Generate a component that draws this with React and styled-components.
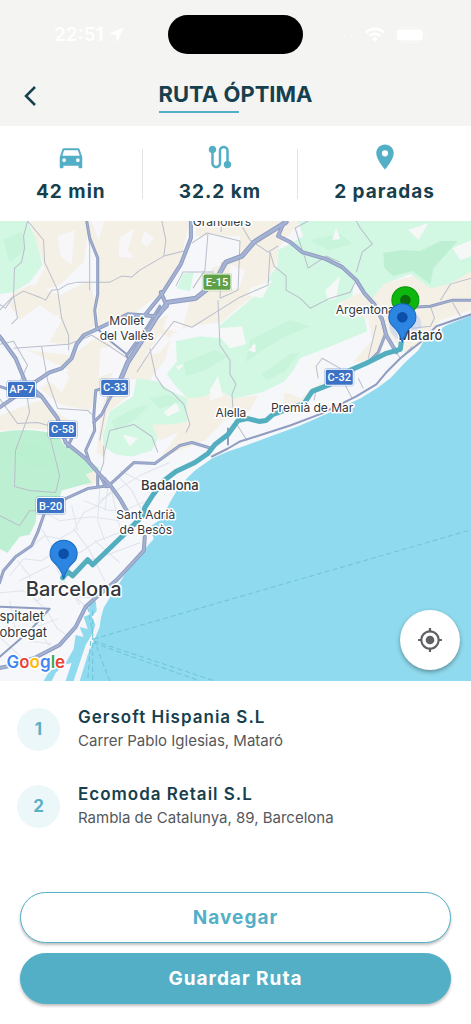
import React from 'react'
import styled, { createGlobalStyle } from 'styled-components'
import { MdDirectionsCar, MdRoute, MdLocationOn, MdMyLocation } from 'react-icons/md'

const GlobalStyle = createGlobalStyle`
  * {
    box-sizing: border-box;
  }
  body {
    margin: 0;
    background: #ffffff;
    font-family: Inter, 'Liberation Sans', sans-serif;
    color: #173f4e;
  }
  button {
    font-family: inherit;
    cursor: pointer;
  }
`

const Page = styled.div`
  display: flex;
  flex-direction: column;
  min-height: 100vh;
`

const Header = styled.header`
  background: #f4f4f2;
  padding: 15px 0 9px;
`

const StatusBar = styled.div`
  display: grid;
  grid-template-columns: 1fr auto 1fr;
  align-items: center;
  color: #ffffff;
`

const Island = styled.div`
  width: 135px;
  height: 39px;
  border-radius: 20px;
  background: #000000;
`

const StatusSide = styled.div`
  display: flex;
  align-items: center;
  gap: ${({ $gap }) => $gap};
  padding: ${({ $padding }) => $padding};
  justify-content: ${({ $end }) => ($end ? 'flex-end' : 'flex-start')};
  font-size: 19px;
  font-weight: 600;
`

const TitleBar = styled.div`
  display: grid;
  grid-template-columns: 60px 1fr 60px;
  align-items: center;
  margin-top: 21px;
`

const BackButton = styled.button`
  display: flex;
  width: 60px;
  height: 42px;
  padding: 0;
  align-items: center;
  justify-content: center;
  border: 0;
  background: transparent;
  color: #173f4e;
`

const Title = styled.h1`
  justify-self: center;
  margin: 0;
  font-size: 22px;
  font-weight: 700;
  line-height: 30px;
  &::after {
    content: '';
    display: block;
    width: 80px;
    height: 2px;
    margin-top: 2px;
    background: #53afc6;
  }
`

const Stats = styled.section`
  display: flex;
  justify-content: space-evenly;
  align-items: center;
  height: 95px;
`

const Stat = styled.div`
  display: flex;
  flex-direction: column;
  align-items: center;
  gap: 8px;
  padding-bottom: 2px;
  font-size: 19px;
  font-weight: 700;
  line-height: 24px;
  letter-spacing: 1px;
  svg {
    color: #53afc6;
  }
`

const Divider = styled.div`
  width: 1px;
  height: 50px;
  background: #e2e4e6;
`

const MapArea = styled.section`
  position: relative;
  flex: 1;
  min-height: 320px;
  overflow: hidden;
  background: #8fdaee;
`

const MapCanvas = styled.svg`
  position: absolute;
  inset: 0;
  width: 100%;
  height: 100%;
`

const Label = styled.text`
  font-family: ${({ $font }) => $font || "Inter, 'Liberation Sans', sans-serif"};
  font-size: ${({ $size }) => $size || 12}px;
  font-weight: ${({ $weight }) => $weight || 400};
  fill: ${({ $fill }) => $fill || '#33373c'};
  text-anchor: ${({ $anchor }) => $anchor || 'middle'};
  stroke: ${({ $plain }) => ($plain ? 'none' : '#ffffff')};
  stroke-width: 3px;
  stroke-linejoin: round;
  paint-order: stroke;
`

const LocateButton = styled.button`
  position: absolute;
  right: 11px;
  bottom: 11px;
  display: flex;
  width: 60px;
  height: 60px;
  align-items: center;
  justify-content: center;
  border: 0;
  border-radius: 50%;
  background: #ffffff;
  color: #5f6063;
  box-shadow: 0 2px 4px rgba(0, 0, 0, 0.35);
`

const StopList = styled.ol`
  display: flex;
  flex-direction: column;
  gap: 31px;
  margin: 0;
  padding: 25px 17px 63px;
  list-style: none;
`

const Stop = styled.li`
  display: flex;
  align-items: center;
  gap: 18px;
`

const StopNumber = styled.span`
  display: flex;
  width: 43px;
  height: 43px;
  flex-shrink: 0;
  align-items: center;
  justify-content: center;
  border-radius: 50%;
  background: #ecf7fa;
  color: #5cb0c4;
  font-size: 17px;
  font-weight: 700;
`

const StopName = styled.div`
  font-size: 17px;
  font-weight: 600;
  line-height: 23px;
  letter-spacing: 1px;
`

const StopAddress = styled.div`
  color: #55585c;
  font-size: 15px;
  line-height: 23px;
`

const Actions = styled.div`
  display: flex;
  flex-direction: column;
  gap: 10px;
  padding: 0 20px 20px;
`

const ActionButton = styled.button`
  height: 51px;
  border: 1px solid #53afc6;
  border-radius: 26px;
  background: ${({ $primary }) => ($primary ? '#53afc6' : '#ffffff')};
  color: ${({ $primary }) => ($primary ? '#ffffff' : '#53afc6')};
  font-size: 19px;
  font-weight: 700;
  letter-spacing: 1px;
  box-shadow: 0 2px 3px rgba(0, 0, 0, 0.25);
`

const beige = [
  'M30 221H190L180 262L165 290L128 318L98 328V258L88 232L84 262L60 285L44 290L32 292L45 268Z',
  'M14 292L32 284L60 295L90 280L95 300V325L72 345L50 342L62 320L40 305L20 320L8 302Z',
  'M100 240L135 224L160 235L168 260L150 292L122 318L100 320Z',
  'M196 221H300L278 249L276 266L256 294L232 312L222 322L190 326L172 334L165 360L150 380L120 378L150 325L205 292L212 268L240 258V236H196Z',
  'M28 350L72 355L100 335L120 350L112 375L98 392L90 410L60 404L40 388L70 370Z',
  'M148 400L185 395L195 425L160 440L150 425Z',
  'M104 400L112 392L128 396L108 412L102 440L108 460L130 470L112 462L97 452L100 425Z',
  'M375 285L440 270L471 262V310L440 320L420 345L405 352L388 335L378 355L362 362L352 362L372 340L368 318L345 314L340 302Z',
  'M185 395L215 388L232 398L258 395L250 410L225 420L205 440L175 452L160 458L180 430L190 410Z',
  'M285 390L300 398L312 388L325 380L305 400L280 414Z',
  'M0 415L40 400L70 420L65 430L30 428L0 430Z',
  'M58 446L90 460L104 478L88 486L78 472L68 465Z',
]

const pale = [
  'M120 238L135 228L128 250L134 258L119 257Z',
  'M58 236L75 230L72 265L61 256Z',
  'M92 221L104 221L99 241Z',
  'M145 231L154 238L147 247L141 242Z',
  'M174 302L190 302L181 333L163 328Z',
  'M101 348L126 343L137 353L120 370L99 377Z',
  'M42 315L60 315L49 337Z',
  'M61 365L70 377L62 392L48 379Z',
  'M208 234L225 236L228 262L208 266Z',
  'M230 264L245 270L240 286L229 291Z',
  'M172 338L160 352L145 356L160 334Z',
]

const green = [
  'M0 221H28L36 238L43 265L30 282L14 292L0 294Z',
  'M298 221H471V271L448 284L430 288L410 274L383 284L372 298L354 281L352 296L337 304L343 316L364 317L367 331L333 345L300 358L292 372L283 382L262 392L234 398L217 389L205 396L188 398L176 386L167 374L177 361L176 341L200 336L222 338L220 325L233 314L258 293L277 266L278 250L290 244L303 236Z',
  'M137 378L157 381L170 390L187 398V421L172 424L152 424L158 438L152 450L132 456L116 454L104 446L103 436L110 411L133 396Z',
  'M177 288L183 274L194 272L190 291Z',
]

const shaded = [
  'M250 340L290 320L310 326L285 336L262 350L246 362Z',
  'M184 362L215 350L228 356L205 370L186 376Z',
  'M262 374L290 354L300 352L284 372L266 380Z',
  'M112 420L134 408L150 404L136 418L116 430Z',
  'M150 398L170 394L180 402L160 408Z',
  'M310 240L340 234L352 244L328 250Z',
  'M4 240L22 232L26 250L10 262Z',
  'M12 446L44 442L56 462L30 470Z',
]

const deepGreen = [
  'M0 432Q28 426 58 434L64 444L84 456L100 468L86 474L92 482L62 490L60 497L38 500L36 522L30 534L20 536L8 552L0 548Z',
  'M383 253L402 250L420 251L440 241H457L444 256L433 268L430 284L412 271L393 276L384 268Z',
]

const clearings = [
  'M408 230L428 223L418 240Z',
  'M250 288L272 280L262 298L248 295Z',
  'M220 328L242 326L246 344L230 348L221 338Z',
  'M248 350L256 344L254 352Z',
  'M325 290L340 276L336 298L328 300Z',
  'M336 228L340 239L332 240Z',
  'M123 434L138 438L130 446Z',
  'M304 366L320 350L330 362L325 376L312 374Z',
  'M210 390L218 376L223 396L210 400Z',
  'M250 350L254 342L256 352Z',
  'M164 412L176 402L180 410L168 416Z',
  'M283 382L294 380L292 394L284 392Z',
  'M452 248L471 240V256L460 260Z',
  'M176 366L184 364L179 370Z',
]

const streets = [
  'M28 221L24 236L25 248L22 262L15 268L14 296L6 308L0 304',
  'M28 221L44 240L45 262L58 290L62 318L69 335V350',
  'M87 225L90 245V290',
  'M0 310L12 298L24 291L40 297L46 300L52 290L60 289L68 284L78 282H110L122 276L132 277L140 270L164 256L184 251',
  'M164 256L166 240L162 221',
  'M192 243L207 233L240 241',
  'M208 234L205 270L193 288',
  'M14 296L18 318L12 324',
  'M0 344L14 341L28 365L20 382',
  'M14 348L69 344L92 335L110 346L128 358',
  'M42 346L48 380L58 408L88 410L92 414',
  'M137 372L150 352L174 321L192 327L216 312L240 297L268 285L270 252',
  'M218 300L220 345L230 360L230 374L236 384L232 394L233 408',
  'M176 286L183 272L214 272M222 221L221 232M222 262L220 298M240 241L238 290L220 298',
  'M240 223L250 240L268 252L278 246M270 252L274 266L286 276L286 290L300 298L310 308L330 298L350 292L356 280',
  'M356 272L362 252L372 244L360 228L356 221M303 252L308 268L326 256L340 262',
  'M302 250L295 228L308 221',
  'M150 348L156 376L164 388L172 392L184 404L190 424L186 432',
  'M104 455L110 430L134 424L152 436L158 452',
  'M104 445L104 462L100 473M110 385L100 440',
  'M0 398L18 423L38 422L60 428M26 386L30 412L16 450L15 486L30 490L56 492L60 475L50 435',
  'M0 515L20 525L30 510L45 510',
  'M376 325L368 358M430 306L434 318L430 326L412 328L408 310',
  'M318 378L316 366L322 358L340 368L334 376M316 388L314 400',
  'M345 385L352 398M235 421L247 440M358 378L363 388',
  'M452 302L460 316M440 300L450 284L471 278M396 352L400 358L412 346',
]

const cityStreets = [
  'M30 548L45 535L60 538L74 530L84 512L98 505L112 490',
  'M10 575L24 558L42 560L60 548L80 552L98 540L125 530',
  'M0 592L24 590L38 600L52 588L74 596L95 597',
  'M18 560L30 575L34 598L46 608L58 628L70 636',
  'M42 528L52 545L58 570L70 588L80 604',
  'M74 528L90 550L105 580M95 540L120 562M60 580L92 612',
  'M84 500L110 510L128 508L148 500M100 488L98 520L105 540',
  'M112 490L118 520L125 540M120 470L150 485L168 485',
  'M100 500L140 475L170 462M118 475L132 490L142 510',
  'M0 620L20 612L40 625L58 618M10 600L16 628L30 640L52 643',
  'M88 560L105 555L140 542M20 580L50 565M72 505L78 530',
  'M45 512L60 520L92 516L120 520M108 488L105 510',
  'M0 636L15 650L25 660M38 628L50 645',
]

const highways = [
  ['M87 221L90 238L98 258V294L95 310L97 328', 3],
  ['M191 221V238L181 264L162 294L145 315', 4],
  ['M286 222L254 242L242 256L226 262L218 276L206 290L196 298L168 302L156 318L145 336L128 362L118 386', 5],
  ['M161 292L167 306L157 316L128 314L97 329L84 335L77 344L72 358L62 368L50 372L35 382L22 392L0 407', 4],
  ['M97 328L112 342L127 354L129 362', 2],
  ['M0 336L16 358L26 382L42 396L58 418L66 442L86 458L100 474L110 484L120 498L128 512', 4],
  ['M0 386L18 392L40 396', 3],
  ['M127 355L148 326L160 306', 3],
  ['M118 384L96 390L94 416L95 430L86 450L90 462L100 474L106 486', 3],
  ['M118 384L108 402L102 414L94 422', 3],
  ['M108 486L134 462L155 463L180 445L192 442L212 448', 3],
  ['M110 485L88 488L66 498L45 512L38 532L32 545L16 556L4 570L0 582', 3],
  ['M98 474V486M105 478L108 486M72 438L68 446', 3],
  ['M145 536L144 550L132 563L116 580L96 597L86 606L76 626L60 644L35 657L10 665L0 667', 4],
  ['M0 606L50 608M50 608L30 630L0 656', 2],
  ['M284 222L278 236L290 242L302 252L326 259L342 267L356 280L364 293L374 304L382 320L386 335L396 352', 4],
  ['M382 318L385 334L378 352L370 360', 3],
  ['M471 300L452 300L430 306L412 307', 3],
  ['M471 314L436 326L420 342L400 358L386 372L376 384L356 396L322 413L290 425L256 436L240 441L228 448L212 456', 2],
  ['M228 428V444', 2],
]

const shields = [
  ['AP-7', 22, 389],
  ['C-33', 115, 387],
  ['C-58', 63, 429],
  ['B-20', 51, 505],
  ['C-32', 339, 377],
]

const Shield = ({ text, x, y, color = '#3c72c6' }) => (
  <g>
    <rect x={x - 15} y={y - 9} width="30" height="18" rx="3" fill={color} opacity="0.5" />
    <rect x={x - 14} y={y - 8} width="28" height="16" rx="2" fill={color} stroke="#ffffff" />
    <Label x={x} y={y + 4} $font="Roboto, sans-serif" $size={11} $weight={500} $fill="#ffffff" $plain>
      {text}
    </Label>
  </g>
)

const Pin = ({ x, y, color, edge, dot }) => (
  <g transform={`translate(${x} ${y})`}>
    <path
      d="M0 25C-2 17-5 13-10 8.500C-12.500 6-13.500 3-13.500 0A13.500 13.500 0 0 1 13.500 0C13.500 3 12.500 6 10 8.500C5 13 2 17 0 25Z"
      fill={color}
      stroke={edge}
    />
    <circle r="5.300" fill={dot} />
  </g>
)

const RouteMap = () => (
  <MapCanvas viewBox="0 221 471 459" preserveAspectRatio="xMidYMid slice" role="img" aria-label="Mapa de la ruta">
    <rect y="221" width="471" height="459" fill="#f6f7fa" />
    {beige.map(d => <path key={d} d={d} fill="#f5f0e6" />)}
    {pale.map(d => <path key={d} d={d} fill="#f7f7f9" />)}
    {green.map(d => <path key={d} d={d} fill="#d2f7e3" />)}
    {deepGreen.map(d => <path key={d} d={d} fill="#bdf0d2" />)}
    {shaded.map(d => <path key={d} d={d} fill="#b4edcb" opacity="0.35" />)}
    {clearings.map(d => <path key={d} d={d} fill="#f6f8f8" />)}
    <g fill="none" strokeLinejoin="round">
      {cityStreets.map(d => <path key={d} d={d} stroke="#dfe4ed" />)}
      {streets.map(d => <path key={d} d={d} stroke="#b9bfcb" />)}
    </g>

    <path
      d="M471 315L446 325L425 338L418 350L405 362L390 378L378 387L360 398L325 414L300 425L262 439L240 447L228 451L212 458L195 470L180 485L170 502L162 518L150 526L154 538L147 546L140 555L128 568L120 582L110 597L104 607L98 628L88 650L79 680H471Z"
      fill="#8fdaee"
    />
    <path
      d="M89 603L96 600L97 610L92 616L96 624L92 634L86 644L80 662L74 680H66L72 662L64 664L56 672L52 680H44L50 670L66 662L74 648L76 634L84 636L80 626L88 628L84 616L90 614Z"
      fill="#8fdaee"
    />
    <path d="M98 606L97 620L92 636L84 656L76 680H80L88 654L100 626L102 610Z" fill="#f3f6f9" />
    <g fill="none" stroke="#6fc3da" strokeDasharray="5 3">
      <path d="M94 638L471 529M94 640L215 680M94 642L200 680M93 610V680M94 638L110 680M91 640L88 680" />
      <path d="M88 606L94 638" />
    </g>

    <g fill="none" strokeLinejoin="round" strokeLinecap="round">
      {highways.map(([d, width]) => <path key={d} d={d} stroke="#8e9cc0" strokeWidth={width} />)}
      {highways.map(([d, width]) => <path key={d} d={d} stroke="#a4b2d3" strokeWidth={width - 2} />)}
    </g>
    <circle cx="405" cy="325" r="16" fill="#9fc1f5" opacity="0.4" />
    <path
      d="M401 341L400 349L386 353L366 363L345 372L330 384L312 391L304 403L290 408L273 414L266 420L259 421L247 418L238 420L228 434L215 444L208 453L195 462L176 471L163 481L152 496L145 507L143 515L134 524L124 534L93 564L88 559L73 575L68 571L63 577"
      fill="none"
      stroke="#53afbf"
      strokeWidth="5"
      strokeLinejoin="round"
      strokeLinecap="round"
    />

    <Shield text="E-15" x={217} y={282} color="#5f9f45" />
    {shields.map(([text, x, y]) => <Shield key={text} text={text} x={x} y={y} />)}

    <Label x="222" y="226">Granollers</Label>
    <Label x="127" y="325">Mollet</Label>
    <Label x="127" y="340">del Vallès</Label>
    <Label x="365" y="314">Argentona</Label>
    <Label x="420" y="340" $size={13} $weight={500}>Mataró</Label>
    <Label x="231" y="417">Alella</Label>
    <Label x="312" y="412">Premià de Mar</Label>
    <Label x="170" y="489" $size={13} $weight={500}>Badalona</Label>
    <Label x="146" y="518">Sant Adrià</Label>
    <Label x="146" y="533">de Besòs</Label>
    <Label x="74" y="595" $size={20} $weight={500}>Barcelona</Label>
    <Label x="0" y="620" $size={13} $anchor="start">spitalet</Label>
    <Label x="0" y="636" $size={13} $anchor="start">obregat</Label>

    <Pin x={405} y={300} color="#0eb70e" edge="#0a930a" dot="#0b6b0b" />
    <Pin x={402} y={317} color="#2d85e2" edge="#1668c2" dot="#0b4fa8" />
    <Pin x={64} y={553} color="#2d85e2" edge="#1668c2" dot="#0b4fa8" />

    <Label x="7" y="667" $size={17} $weight={600} $anchor="start">
      <tspan fill="#4285f4">G</tspan>
      <tspan fill="#ea4335">o</tspan>
      <tspan fill="#fbbc05">o</tspan>
      <tspan fill="#4285f4">g</tspan>
      <tspan fill="#34a853">l</tspan>
      <tspan fill="#ea4335">e</tspan>
    </Label>
  </MapCanvas>
)

const stops = [
  { name: 'Gersoft Hispania S.L', address: 'Carrer Pablo Iglesias, Mataró' },
  { name: 'Ecomoda Retail S.L', address: 'Rambla de Catalunya, 89, Barcelona' },
]

const App = () => {
  return (
    <Page>
      <GlobalStyle />
      <Header>
        <StatusBar>
          <StatusSide $gap="4px" $padding="0 0 0 54px">
            <span>22:51</span>
            <svg width="16" height="16" viewBox="0 0 16 16" aria-hidden="true">
              <path d="M15.500 0.500L9 15.500L8 8L0.500 7Z" fill="#ffffff" />
            </svg>
          </StatusSide>
          <Island />
          <StatusSide $end $gap="10px" $padding="0 43px 0 0">
            <svg width="24" height="4" viewBox="0 0 24 4" aria-hidden="true">
              <g fill="#f9f9f8">
                <circle cx="2" cy="3" r="1" />
                <circle cx="8" cy="3" r="1" />
                <circle cx="14" cy="3" r="1" />
                <circle cx="20" cy="3" r="1" />
              </g>
            </svg>
            <svg width="20" height="15" viewBox="0 0 20 15" aria-hidden="true">
              <g fill="none" stroke="#ffffff" strokeWidth="2.600">
                <path d="M1 5.500A13 13 0 0 1 19 5.500" />
                <path d="M4.500 9A8 8 0 0 1 15.500 9" />
              </g>
              <path d="M10 14.500L7 11.500A4.500 4.500 0 0 1 13 11.500Z" fill="#ffffff" />
            </svg>
            <svg width="33" height="16" viewBox="0 0 33 16" aria-hidden="true">
              <rect x="0.500" y="0.500" width="29" height="15" rx="5" fill="none" stroke="#f7f7f6" />
              <rect x="2" y="2.500" width="26" height="11" rx="4" fill="#ffffff" />
              <path d="M31 5.500Q33 8 31 10.500Z" fill="#f9f9f8" />
            </svg>
          </StatusSide>
        </StatusBar>
        <TitleBar>
          <BackButton aria-label="Volver">
            <svg width="14" height="22" viewBox="0 0 14 22" aria-hidden="true">
              <path d="M12 2L3 11L12 20" fill="none" stroke="currentColor" strokeWidth="2.500" />
            </svg>
          </BackButton>
          <Title>RUTA ÓPTIMA</Title>
        </TitleBar>
      </Header>

      <Stats>
        <Stat>
          <MdDirectionsCar size={30} />
          42 min
        </Stat>
        <Divider />
        <Stat>
          <MdRoute size={30} />
          32.2 km
        </Stat>
        <Divider />
        <Stat>
          <MdLocationOn size={30} />
          2 paradas
        </Stat>
      </Stats>

      <MapArea>
        <RouteMap />
        <LocateButton aria-label="Mi ubicación">
          <MdMyLocation size={26} />
        </LocateButton>
      </MapArea>

      <StopList>
        {stops.map((stop, index) => (
          <Stop key={stop.name}>
            <StopNumber>{index + 1}</StopNumber>
            <div>
              <StopName>{stop.name}</StopName>
              <StopAddress>{stop.address}</StopAddress>
            </div>
          </Stop>
        ))}
      </StopList>

      <Actions>
        <ActionButton>Navegar</ActionButton>
        <ActionButton $primary>Guardar Ruta</ActionButton>
      </Actions>
    </Page>
  )
}

export default App
